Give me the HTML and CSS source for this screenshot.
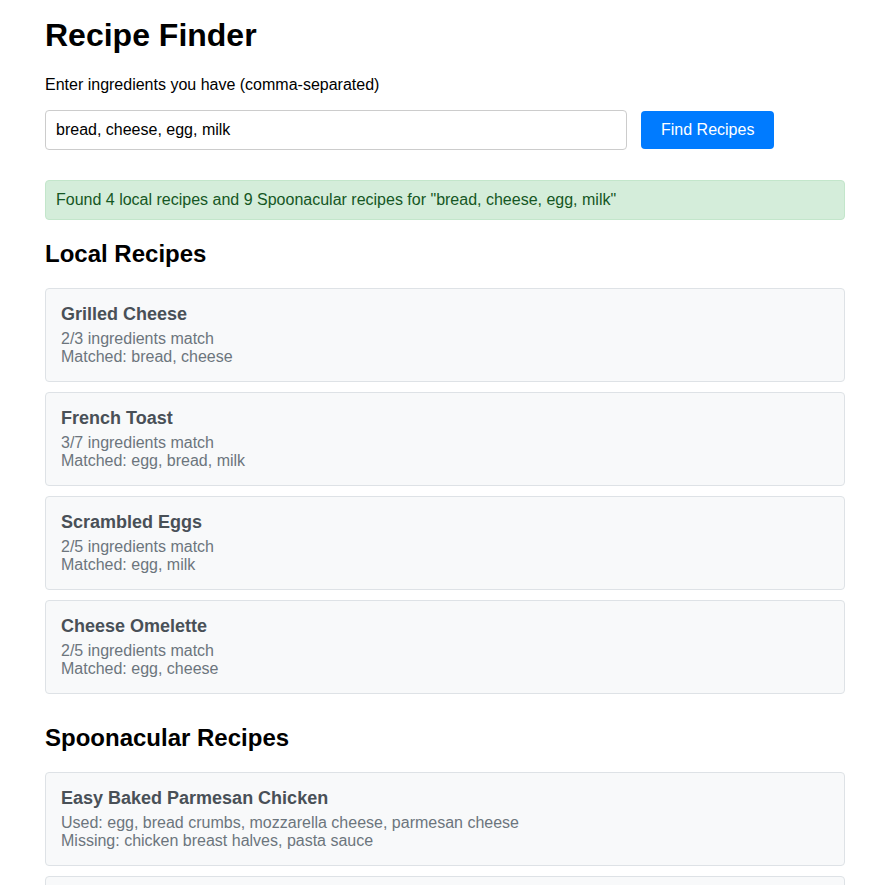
FILE: index.html
```html
<!DOCTYPE html>
<html>
<head>
<meta charset="utf-8">
<title>Recipe Finder</title>
<link rel="stylesheet" href="styles.css">
</head>
<body>
<div class="container">
  <h1 class="title">Recipe Finder</h1>
  <p class="label">Enter ingredients you have (comma-separated)</p>
  <div class="search-row">
    <input class="search-input" type="text" value="bread, cheese, egg, milk">
    <button class="search-btn">Find Recipes</button>
  </div>
  <div class="alert">Found 4 local recipes and 9 Spoonacular recipes for "bread, cheese, egg, milk"</div>

  <h2 class="section-title">Local Recipes</h2>
  <div class="list">
    <div class="card">
      <h3 class="card-title">Grilled Cheese</h3>
      <div class="card-line">2/3 ingredients match</div>
      <div class="card-line">Matched: bread, cheese</div>
    </div>
    <div class="card">
      <h3 class="card-title">French Toast</h3>
      <div class="card-line">3/7 ingredients match</div>
      <div class="card-line">Matched: egg, bread, milk</div>
    </div>
    <div class="card">
      <h3 class="card-title">Scrambled Eggs</h3>
      <div class="card-line">2/5 ingredients match</div>
      <div class="card-line">Matched: egg, milk</div>
    </div>
    <div class="card">
      <h3 class="card-title">Cheese Omelette</h3>
      <div class="card-line">2/5 ingredients match</div>
      <div class="card-line">Matched: egg, cheese</div>
    </div>
  </div>

  <h2 class="section-title section-gap">Spoonacular Recipes</h2>
  <div class="list">
    <div class="card">
      <h3 class="card-title">Easy Baked Parmesan Chicken</h3>
      <div class="card-line">Used: egg, bread crumbs, mozzarella cheese, parmesan cheese</div>
      <div class="card-line">Missing: chicken breast halves, pasta sauce</div>
    </div>
    <div class="card">
      <h3 class="card-title">Breakfast Strata</h3>
      <div class="card-line">Used: bread, cheese, egg, milk</div>
      <div class="card-line">Missing: sausage</div>
    </div>
  </div>
</div>
</body>
</html>
```

FILE: styles.css
```css
html, body {
  margin: 0;
  padding: 0;
  background: #ffffff;
}
body {
  font-family: "Liberation Sans", Arial, sans-serif;
  font-size: 16px;
  color: #000;
}
.container {
  width: 800px;
  margin-left: 45px;
  padding-top: 17px;
}
.title {
  font-size: 32px;
  font-weight: bold;
  margin: 0 0 22px 0;
  line-height: normal;
}
.label {
  margin: 0 0 16px 0;
}
.search-row {
  display: flex;
  align-items: center;
  gap: 14px;
  margin-bottom: 30px;
}
.search-input {
  width: 560px;
  padding: 10px;
  border: 1px solid #ccc;
  border-radius: 4px;
  font-family: "Liberation Sans", Arial, sans-serif;
  font-size: 16px;
  color: #000;
  line-height: normal;
  outline: none;
}
.search-btn {
  padding: 10px 20px;
  background: #007bff;
  color: #fff;
  border: none;
  border-radius: 4px;
  font-family: "Liberation Sans", Arial, sans-serif;
  font-size: 16px;
  line-height: normal;
  cursor: pointer;
}
.alert {
  padding: 10px;
  background: #d4edda;
  border: 1px solid #c3e6cb;
  color: #155724;
  border-radius: 4px;
}
.section-title {
  font-size: 24px;
  font-weight: bold;
  margin: 20px 0;
}
.section-gap {
  margin-top: 30px;
}
.list {
  display: flex;
  flex-direction: column;
  gap: 10px;
}
.card {
  padding: 15px;
  background: #f8f9fa;
  border: 1px solid #dee2e6;
  border-radius: 4px;
  color: #6c757d;
}
.card-title {
  margin: 0 0 5px 0;
  font-size: 18px;
  font-weight: bold;
  color: #495057;
}
```
